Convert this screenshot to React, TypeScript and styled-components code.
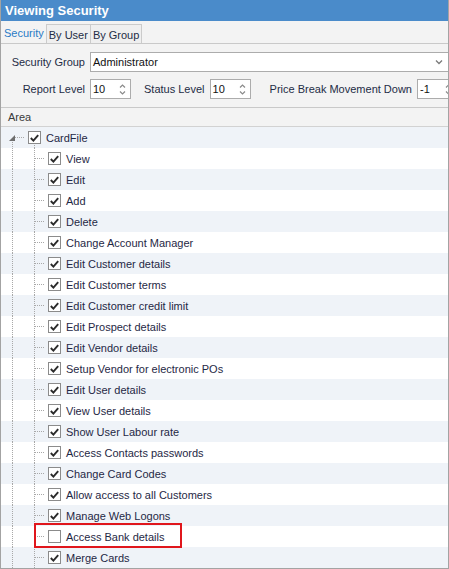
import styled, { createGlobalStyle } from "styled-components"

const GlobalStyle = createGlobalStyle`
  html, body { margin: 0; padding: 0; background: #fff; }
  body { font-family: "Liberation Sans", Arial, sans-serif; }
`

const Window = styled.div`
  width: 449px;
  height: 569px;
  box-sizing: border-box;
  overflow: hidden;
  background: #f3f3f3;
  border: 1px solid #a3a3a3;
  border-top: none;
  display: flex;
  flex-direction: column;
`

const TitleBar = styled.div`
  height: 22px;
  margin: 0 -1px;
  background: #4a8bca;
  color: #fff;
  font-weight: bold;
  font-size: 13px;
  display: flex;
  align-items: center;
  padding-left: 5px;
`

const TabStrip = styled.div`
  height: 22px;
  display: flex;
  align-items: flex-end;
  border-bottom: 1px solid #c9c9c9;
`

const Tab = styled.div<{ $active?: boolean }>`
  height: ${(p) => (p.$active ? 22 : 19)}px;
  box-sizing: border-box;
  padding: ${(p) => (p.$active ? "0 2px" : "1px 2px 0")};
  display: flex;
  align-items: center;
  font-size: 11px;
  color: ${(p) => (p.$active ? "#2a7bc6" : "#232c45")};
  background: ${(p) => (p.$active ? "#f3f3f3" : "#efefef")};
  border: 1px solid ${(p) => (p.$active ? "transparent" : "#cbcbcb")};
  border-bottom: none;
  margin-left: ${(p) => (p.$active ? 0 : -1)}px;
`

const Form = styled.div`
  display: flex;
  flex-direction: column;
  gap: 7px;
  padding: 8px 0;
  border-bottom: 1px solid #c9c9c9;
`

const FieldRow = styled.div`
  display: flex;
  align-items: center;
`

const Label = styled.span<{ $width?: number; $gap?: number }>`
  flex-shrink: 0;
  font-size: 11px;
  color: #232c45;
  white-space: nowrap;
  text-align: right;
  width: ${(p) => (p.$width ? `${p.$width}px` : "auto")};
  margin-left: ${(p) => p.$gap ?? 0}px;
  margin-right: 5px;
`

const TextBox = styled.div<{ $width: number }>`
  width: ${(p) => p.$width}px;
  flex-shrink: 0;
  height: 20px;
  box-sizing: border-box;
  border: 1px solid #acacac;
  background: #fff;
  display: flex;
  align-items: center;
  padding-left: 2px;
  font-size: 11px;
  color: #111;
`

const Value = styled.span`
  flex: 1;
`

const TrailIcon = styled.svg<{ $inset?: number }>`
  margin-right: ${(p) => p.$inset ?? 4}px;
  flex-shrink: 0;
`

const AreaHeader = styled.div`
  height: 18px;
  display: flex;
  align-items: center;
  padding-left: 7px;
  font-size: 11px;
  color: #3a3a3a;
  border-bottom: 1px solid #d2d2d2;
`

const Tree = styled.div`
  flex: 1;
  background: #fff;
`

const dotsDown = "repeating-linear-gradient(to bottom, #a8a8a8 0 1px, transparent 1px 2px)"
const dotsAcross = "repeating-linear-gradient(to right, #a8a8a8 0 1px, transparent 1px 2px)"

const TreeRow = styled.div<{ $odd: boolean }>`
  position: relative;
  height: 21px;
  display: flex;
  align-items: center;
  background: ${(p) => (p.$odd ? "#fff" : "#eff3f8")};
  font-size: 11px;
  color: #1f2845;
`

// vertical guide of the root level, carried down past every child row
const Rail = styled.div`
  width: 33px;
  height: 100%;
  flex-shrink: 0;
  background-image: ${dotsDown};
  background-size: 1px 100%;
  background-position: 11px 0;
  background-repeat: no-repeat;
`

const RootRail = styled.div`
  width: 27px;
  height: 100%;
  flex-shrink: 0;
  display: flex;
  align-items: center;
  background-image: ${dotsDown}, ${dotsAcross};
  background-size: 1px 50%, 10px 1px;
  background-position: 11px 100%, 14px 10px;
  background-repeat: no-repeat;
  padding-left: 8px;
  box-sizing: border-box;
`

const Branch = styled.div`
  width: 14px;
  height: 100%;
  flex-shrink: 0;
  background-image: ${dotsDown}, ${dotsAcross};
  background-size: 1px 100%, 10px 1px;
  background-position: 0 0, 1px 10px;
  background-repeat: no-repeat;
`

const CheckWrap = styled.div<{ $stem?: boolean }>`
  width: 13px;
  height: 100%;
  flex-shrink: 0;
  display: flex;
  align-items: center;
  margin-right: 5px;
  background-image: ${(p) => (p.$stem ? dotsDown : "none")};
  background-size: 1px 7px;
  background-position: 6px 100%;
  background-repeat: no-repeat;
`

const Box = styled.div`
  width: 13px;
  height: 13px;
  box-sizing: border-box;
  border: 1px solid #8b8b8b;
  background: #fff;
  display: flex;
  align-items: center;
  justify-content: center;
`

const Highlight = styled.div`
  position: absolute;
  left: 33px;
  top: -3px;
  width: 148px;
  height: 25px;
  box-sizing: border-box;
  border: 2px solid #e0161c;
  z-index: 1;
  pointer-events: none;
`

function Check({ on }: { on: boolean }) {
  return (
    <Box>
      {on && (
        <svg width="9" height="8" viewBox="0 0 9 8">
          <path d="M0.8 4 L3.4 6.6 L8.2 1.2" fill="none" stroke="#2b2b2b" strokeWidth="1.9" />
        </svg>
      )}
    </Box>
  )
}

function Spinner() {
  return (
    <TrailIcon width="7" height="13" viewBox="0 0 7 13">
      <path d="M1 4.5 L3.5 2 L6 4.5" fill="none" stroke="#8a8a8a" strokeWidth="1.2" />
      <path d="M1 8.5 L3.5 11 L6 8.5" fill="none" stroke="#8a8a8a" strokeWidth="1.2" />
    </TrailIcon>
  )
}

function Chevron() {
  return (
    <TrailIcon $inset={6} width="8" height="6" viewBox="0 0 8 6">
      <path d="M1 1.5 L4 4.5 L7 1.5" fill="none" stroke="#7a7a7a" strokeWidth="1.3" />
    </TrailIcon>
  )
}

const permissions: { name: string; on: boolean; flagged?: boolean }[] = [
  { name: "View", on: true },
  { name: "Edit", on: true },
  { name: "Add", on: true },
  { name: "Delete", on: true },
  { name: "Change Account Manager", on: true },
  { name: "Edit Customer details", on: true },
  { name: "Edit Customer terms", on: true },
  { name: "Edit Customer credit limit", on: true },
  { name: "Edit Prospect details", on: true },
  { name: "Edit Vendor details", on: true },
  { name: "Setup Vendor for electronic POs", on: true },
  { name: "Edit User details", on: true },
  { name: "View User details", on: true },
  { name: "Show User Labour rate", on: true },
  { name: "Access Contacts passwords", on: true },
  { name: "Change Card Codes", on: true },
  { name: "Allow access to all Customers", on: true },
  { name: "Manage Web Logons", on: true },
  { name: "Access Bank details", on: false, flagged: true },
  { name: "Merge Cards", on: true },
]

export default function App() {
  return (
    <>
      <GlobalStyle />
      <Window>
        <TitleBar>Viewing Security</TitleBar>
        <TabStrip>
          <Tab $active>Security</Tab>
          <Tab>By User</Tab>
          <Tab>By Group</Tab>
        </TabStrip>

        <Form>
          <FieldRow>
            <Label $width={84}>Security Group</Label>
            <TextBox $width={360}>
              <Value>Administrator</Value>
              <Chevron />
            </TextBox>
          </FieldRow>
          <FieldRow>
            <Label $width={84}>Report Level</Label>
            <TextBox $width={41}>
              <Value>10</Value>
              <Spinner />
            </TextBox>
            <Label $gap={13}>Status Level</Label>
            <TextBox $width={41}>
              <Value>10</Value>
              <Spinner />
            </TextBox>
            <Label $gap={19}>Price Break Movement Down</Label>
            <TextBox $width={40}>
              <Value>-1</Value>
              <Spinner />
            </TextBox>
          </FieldRow>
        </Form>

        <AreaHeader>Area</AreaHeader>

        <Tree>
          <TreeRow $odd={false}>
            <RootRail>
              <svg width="6" height="6" viewBox="0 0 6 6">
                <path d="M6 0 L6 6 L0 6 Z" fill="#6e6e6e" />
              </svg>
            </RootRail>
            <CheckWrap $stem>
              <Check on />
            </CheckWrap>
            CardFile
          </TreeRow>
          {permissions.map((p, i) => (
            <TreeRow key={p.name} $odd={i % 2 === 0}>
              <Rail />
              <Branch />
              <CheckWrap>
                <Check on={p.on} />
              </CheckWrap>
              {p.name}
              {p.flagged && <Highlight />}
            </TreeRow>
          ))}
        </Tree>
      </Window>
    </>
  )
}
